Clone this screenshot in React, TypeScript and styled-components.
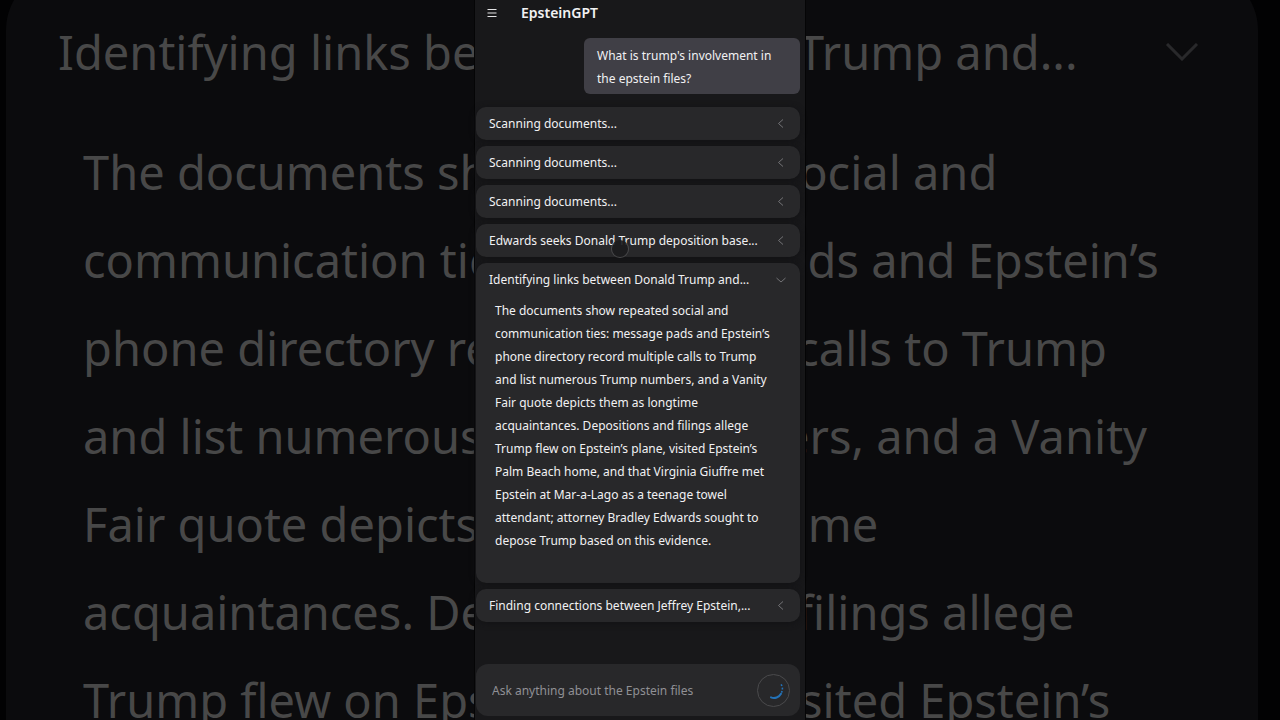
import React, { useState } from "react";
import styled, { createGlobalStyle } from "styled-components";

const GlobalStyle = createGlobalStyle`
  * { box-sizing: border-box; }
  body {
    margin: 0;
    background: #020203;
    color: #f1f1f3;
    font-family: "Noto Sans", "Open Sans", sans-serif;
    font-size: 12px;
  }
  button, input { font: inherit; color: inherit; }
`;

const Stage = styled.div`
  position: relative;
  display: flex;
  justify-content: center;
  min-height: 100vh;
  overflow: hidden;
`;

const Backdrop = styled.div`
  position: absolute;
  inset: -30px 22px 0 6px;
  padding: 38px 59px 0 52px;
  overflow: hidden;
  border-radius: 60px 60px 0 0;
  background: #0b0b0d;
  color: #484848;
  font-size: 47px;
  line-height: 88px;
  white-space: nowrap;
`;

const BackdropHeading = styled.div`
  display: flex;
  align-items: center;
  justify-content: space-between;
  margin-bottom: 32px;
`;

const BackdropLine = styled.div`
  padding-left: 25px;
`;

const Panel = styled.main`
  position: relative;
  display: flex;
  flex-direction: column;
  width: 100%;
  max-width: 330px;
  min-height: 100vh;
  padding: 0 5px 4px 1px;
  background: #18181a;
  box-shadow: 0 0 0 1px #050506;
`;

const Header = styled.header`
  display: flex;
  align-items: center;
  gap: 23px;
  height: 26px;
  padding-left: 10px;
`;

const Title = styled.h1`
  margin: 0;
  font-size: 14px;
  font-weight: 600;
  line-height: 20px;
`;

const IconButton = styled.button`
  display: grid;
  place-items: center;
  width: 12px;
  height: 20px;
  padding: 0;
  border: 0;
  background: none;
`;

const Bubble = styled.p`
  align-self: flex-end;
  width: 216px;
  margin: 12px 0 13px;
  padding: 6px 13px 4px;
  border-radius: 6px;
  background: #403f46;
  line-height: 23px;
`;

const Steps = styled.div`
  display: flex;
  flex-direction: column;
  gap: 6px;
`;

const Card = styled.section`
  border-radius: 10px;
  background: #28282a;
  box-shadow: 0 1px 6px #121214;
`;

const CardToggle = styled.button`
  display: flex;
  align-items: center;
  justify-content: space-between;
  width: 100%;
  height: 33px;
  padding: 0 13px;
  border: 0;
  background: none;
  text-align: left;
  white-space: nowrap;
  cursor: pointer;
`;

const CardBody = styled.p`
  margin: 0;
  padding: 3px 10px 31px 19px;
  line-height: 23px;
  white-space: pre-line;
`;

const Composer = styled.form`
  display: flex;
  align-items: center;
  height: 52px;
  margin-top: auto;
  padding: 0 10px 0 16px;
  border-radius: 12px;
  background: #28282a;
`;

const Prompt = styled.input`
  flex: 1;
  min-width: 0;
  padding: 0;
  border: 0;
  outline: 0;
  background: none;
  &::placeholder { color: #909095; opacity: 1; }
`;

const SendButton = styled.button`
  display: grid;
  place-items: center;
  width: 33px;
  height: 33px;
  padding: 0;
  border: 1px solid #4a4a4c;
  border-radius: 50%;
  background: none;
`;

const TouchPoint = styled.span`
  position: absolute;
  top: 240px;
  left: 136px;
  width: 18px;
  height: 18px;
  border: 1px solid #48484a;
  border-top-color: transparent;
  border-radius: 50%;
  background: #1b1b1de6;
  pointer-events: none;
`;

const findings = [
  "The documents show repeated social and",
  "communication ties: message pads and Epstein’s",
  "phone directory record multiple calls to Trump",
  "and list numerous Trump numbers, and a Vanity",
  "Fair quote depicts them as longtime",
  "acquaintances. Depositions and filings allege",
  "Trump flew on Epstein’s plane, visited Epstein’s",
  "Palm Beach home, and that Virginia Giuffre met",
  "Epstein at Mar-a-Lago as a teenage towel",
  "attendant; attorney Bradley Edwards sought to",
  "depose Trump based on this evidence.",
];

const steps = [
  { title: "Scanning documents..." },
  { title: "Scanning documents..." },
  { title: "Scanning documents..." },
  { title: "Edwards seeks Donald Trump deposition base..." },
  { title: "Identifying links between Donald Trump and...", body: findings.join("\n") },
  { title: "Finding connections between Jeffrey Epstein,..." },
];

function Chevron({ open }: { open: boolean }) {
  return (
    <svg width="12" height="12" viewBox="0 0 12 12" fill="none" stroke="#737376" aria-hidden="true">
      <path d={open ? "M1.5 4 6 8 10.5 4" : "M8 1.5 3.5 5.5 8 9.5"} />
    </svg>
  );
}

export default function App() {
  const [openIndex, setOpenIndex] = useState(4);

  return (
    <Stage>
      <GlobalStyle />
      <Backdrop aria-hidden="true">
        <BackdropHeading>
          <span>Identifying links between Donald Trump and...</span>
          <svg width="34" height="18" viewBox="0 0 34 18" fill="none" stroke="#29292b" strokeWidth="3">
            <path d="M2 1 17 16 32 1" />
          </svg>
        </BackdropHeading>
        {findings.slice(0, 7).map((line) => (
          <BackdropLine key={line}>{line}</BackdropLine>
        ))}
      </Backdrop>
      <Panel>
        <Header>
          <IconButton type="button" aria-label="Menu">
            <svg width="10" height="10" viewBox="0 0 10 10" stroke="#e4e4e6" strokeWidth="1.2">
              <path d="M0.5 1.5h9M0.5 5h9M0.5 8.5h9" />
            </svg>
          </IconButton>
          <Title>EpsteinGPT</Title>
        </Header>
        <Bubble>What is trump's involvement in the epstein files?</Bubble>
        <Steps>
          {steps.map((step, index) => {
            const open = index === openIndex;
            return (
              <Card key={index}>
                <CardToggle type="button" aria-expanded={open} onClick={() => setOpenIndex(open ? -1 : index)}>
                  <span>{step.title}</span>
                  <Chevron open={open} />
                </CardToggle>
                {open && step.body && <CardBody>{step.body}</CardBody>}
              </Card>
            );
          })}
        </Steps>
        <Composer onSubmit={(event) => event.preventDefault()}>
          <Prompt aria-label="Ask a question" placeholder="Ask anything about the Epstein files" />
          <SendButton type="submit" aria-label="Working">
            <svg width="24" height="24" viewBox="0 0 24 24" fill="none" stroke="#2372b8" strokeWidth="2" aria-hidden="true">
              <path d="M9 19.4A8 8 0 0 0 19 15.8" strokeLinecap="round" />
              <path d="M19.4 14.7A8 8 0 0 0 18.8 6" strokeWidth="1.6" strokeDasharray="1.8 1.6" />
            </svg>
          </SendButton>
        </Composer>
        <TouchPoint aria-hidden="true" />
      </Panel>
    </Stage>
  );
}
